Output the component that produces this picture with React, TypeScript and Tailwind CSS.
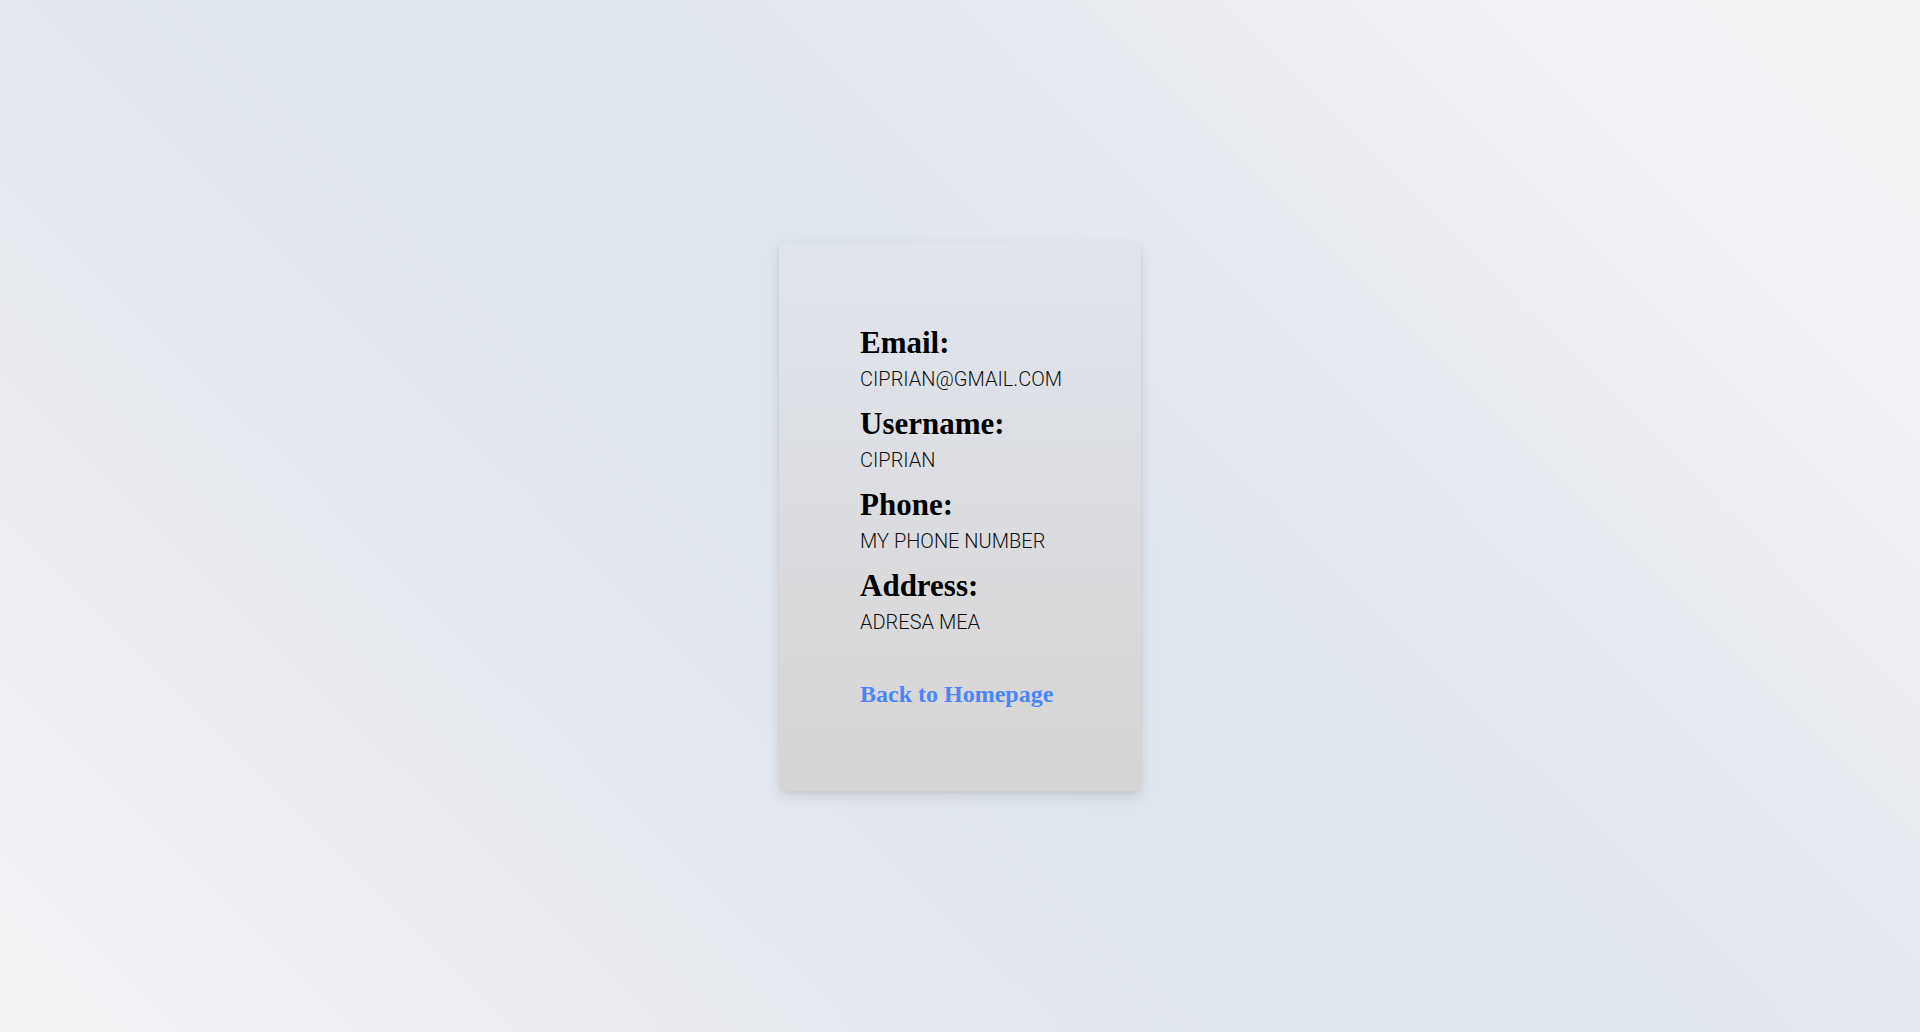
import React from 'react'

const fields = [
    { label: 'Email:', value: 'ciprian@gmail.com' },
    { label: 'Username:', value: 'ciprian' },
    { label: 'Phone:', value: 'my phone number' },
    { label: 'Address:', value: 'adresa mea' },
]

export default function App() {
    return (
        <div className="min-h-screen w-full flex items-center justify-center bg-[linear-gradient(45deg,#f3f3f5_0%,#eceef2_15%,#e8eaef_25%,#e4e8f0_33%,#e0e6ee_45%,#e0e6ee_55%,#e5e8f0_65%,#eaecf1_74%,#f0f1f4_85%,#f3f3f5_100%)]">
            <div className="w-[362px] rounded-lg bg-[linear-gradient(to_bottom,#e0e5ed,#d7d4d4)] shadow-[0_6px_14px_rgba(0,0,0,0.10),0_1px_4px_rgba(0,0,0,0.06)] pl-[81px] pr-6 pt-[81px] pb-[81px]">
                {fields.map((f, i) => (
                    <div key={f.label} className={i > 0 ? 'mt-[13px]' : ''}>
                        <h2 className="font-['Liberation_Serif',serif] font-bold text-[31px] leading-[40px] text-black">
                            {f.label}
                        </h2>
                        <p className="mt-[4px] font-['Roboto',sans-serif] font-light text-[20px] leading-[24px] uppercase text-[#111]">
                            {f.value}
                        </p>
                    </div>
                ))}
                <a
                    href="#"
                    className="block mt-[44px] font-['Liberation_Serif',serif] font-bold text-[24px] leading-[32px] text-[#4a86f6]"
                >
                    Back to Homepage
                </a>
            </div>
        </div>
    )
}
